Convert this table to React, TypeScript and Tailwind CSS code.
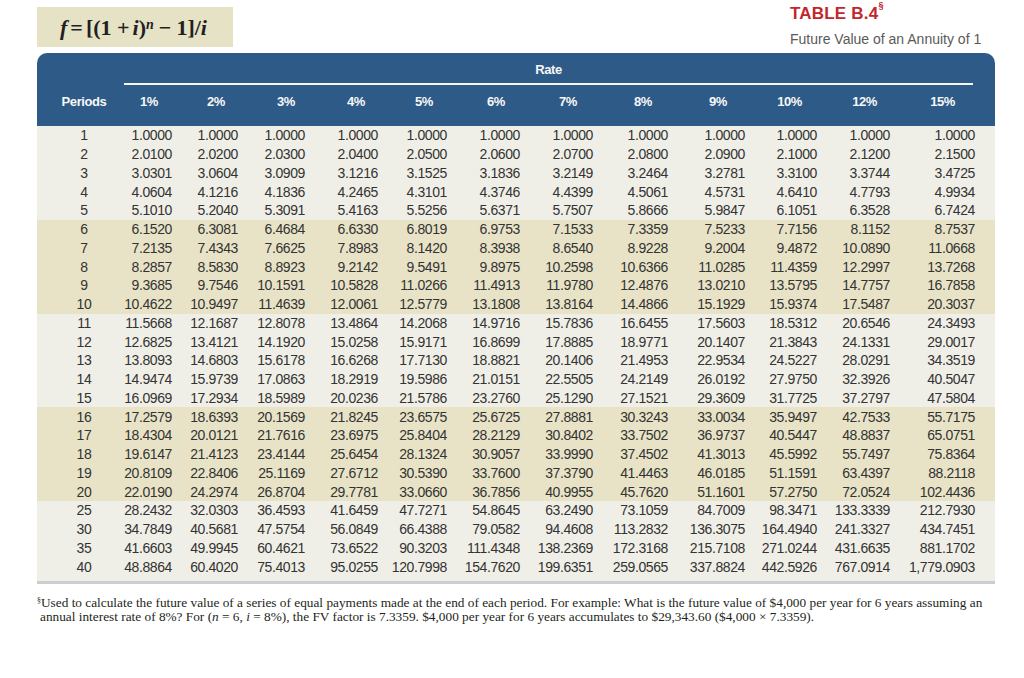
const rates = ['1%', '2%', '3%', '4%', '5%', '6%', '7%', '8%', '9%', '10%', '12%', '15%'];

// header labels sit a little left of the number column's right edge
const headerPad = [
  'pr-[14px]', 'pr-[13px]', 'pr-[10px]', 'pr-[13px]', 'pr-[14px]', 'pr-[15px]',
  'pr-[16px]', 'pr-[16px]', 'pr-[18px]', 'pr-[15px]', 'pr-[13px]', 'pr-[20px]',
];

const gridCols =
  'grid grid-cols-[79px_56px_66px_67px_73px_69px_73px_73px_75px_77px_72px_73px_85px]';

const bands: { shade: 'light' | 'dark'; rows: string[][] }[] = [
  {
    shade: 'light',
    rows: [
      ['1', '1.0000', '1.0000', '1.0000', '1.0000', '1.0000', '1.0000', '1.0000', '1.0000', '1.0000', '1.0000', '1.0000', '1.0000'],
      ['2', '2.0100', '2.0200', '2.0300', '2.0400', '2.0500', '2.0600', '2.0700', '2.0800', '2.0900', '2.1000', '2.1200', '2.1500'],
      ['3', '3.0301', '3.0604', '3.0909', '3.1216', '3.1525', '3.1836', '3.2149', '3.2464', '3.2781', '3.3100', '3.3744', '3.4725'],
      ['4', '4.0604', '4.1216', '4.1836', '4.2465', '4.3101', '4.3746', '4.4399', '4.5061', '4.5731', '4.6410', '4.7793', '4.9934'],
      ['5', '5.1010', '5.2040', '5.3091', '5.4163', '5.5256', '5.6371', '5.7507', '5.8666', '5.9847', '6.1051', '6.3528', '6.7424'],
    ],
  },
  {
    shade: 'dark',
    rows: [
      ['6', '6.1520', '6.3081', '6.4684', '6.6330', '6.8019', '6.9753', '7.1533', '7.3359', '7.5233', '7.7156', '8.1152', '8.7537'],
      ['7', '7.2135', '7.4343', '7.6625', '7.8983', '8.1420', '8.3938', '8.6540', '8.9228', '9.2004', '9.4872', '10.0890', '11.0668'],
      ['8', '8.2857', '8.5830', '8.8923', '9.2142', '9.5491', '9.8975', '10.2598', '10.6366', '11.0285', '11.4359', '12.2997', '13.7268'],
      ['9', '9.3685', '9.7546', '10.1591', '10.5828', '11.0266', '11.4913', '11.9780', '12.4876', '13.0210', '13.5795', '14.7757', '16.7858'],
      ['10', '10.4622', '10.9497', '11.4639', '12.0061', '12.5779', '13.1808', '13.8164', '14.4866', '15.1929', '15.9374', '17.5487', '20.3037'],
    ],
  },
  {
    shade: 'light',
    rows: [
      ['11', '11.5668', '12.1687', '12.8078', '13.4864', '14.2068', '14.9716', '15.7836', '16.6455', '17.5603', '18.5312', '20.6546', '24.3493'],
      ['12', '12.6825', '13.4121', '14.1920', '15.0258', '15.9171', '16.8699', '17.8885', '18.9771', '20.1407', '21.3843', '24.1331', '29.0017'],
      ['13', '13.8093', '14.6803', '15.6178', '16.6268', '17.7130', '18.8821', '20.1406', '21.4953', '22.9534', '24.5227', '28.0291', '34.3519'],
      ['14', '14.9474', '15.9739', '17.0863', '18.2919', '19.5986', '21.0151', '22.5505', '24.2149', '26.0192', '27.9750', '32.3926', '40.5047'],
      ['15', '16.0969', '17.2934', '18.5989', '20.0236', '21.5786', '23.2760', '25.1290', '27.1521', '29.3609', '31.7725', '37.2797', '47.5804'],
    ],
  },
  {
    shade: 'dark',
    rows: [
      ['16', '17.2579', '18.6393', '20.1569', '21.8245', '23.6575', '25.6725', '27.8881', '30.3243', '33.0034', '35.9497', '42.7533', '55.7175'],
      ['17', '18.4304', '20.0121', '21.7616', '23.6975', '25.8404', '28.2129', '30.8402', '33.7502', '36.9737', '40.5447', '48.8837', '65.0751'],
      ['18', '19.6147', '21.4123', '23.4144', '25.6454', '28.1324', '30.9057', '33.9990', '37.4502', '41.3013', '45.5992', '55.7497', '75.8364'],
      ['19', '20.8109', '22.8406', '25.1169', '27.6712', '30.5390', '33.7600', '37.3790', '41.4463', '46.0185', '51.1591', '63.4397', '88.2118'],
      ['20', '22.0190', '24.2974', '26.8704', '29.7781', '33.0660', '36.7856', '40.9955', '45.7620', '51.1601', '57.2750', '72.0524', '102.4436'],
    ],
  },
  {
    shade: 'light',
    rows: [
      ['25', '28.2432', '32.0303', '36.4593', '41.6459', '47.7271', '54.8645', '63.2490', '73.1059', '84.7009', '98.3471', '133.3339', '212.7930'],
      ['30', '34.7849', '40.5681', '47.5754', '56.0849', '66.4388', '79.0582', '94.4608', '113.2832', '136.3075', '164.4940', '241.3327', '434.7451'],
      ['35', '41.6603', '49.9945', '60.4621', '73.6522', '90.3203', '111.4348', '138.2369', '172.3168', '215.7108', '271.0244', '431.6635', '881.1702'],
      ['40', '48.8864', '60.4020', '75.4013', '95.0255', '120.7998', '154.7620', '199.6351', '259.0565', '337.8824', '442.5926', '767.0914', '1,779.0903'],
    ],
  },
];

export default function App() {
  return (
    <div className="w-[1024px] h-[678px] bg-white overflow-hidden font-['Liberation_Sans',Arial,sans-serif]">
      {/* top strip: formula + table title */}
      <div className="flex items-start justify-between pl-[37px] pr-[36px] pt-[7px] h-[53px]">
        <div className="w-[196px] h-[40px] bg-[#e6e2c6] flex items-center pl-[23px] font-['Liberation_Serif','Times_New_Roman',serif] font-bold text-[22px] text-[#231f20] whitespace-nowrap">
          <span className="italic">f</span>
          <span className="px-[3px]">=</span>
          <span>[(1 + </span>
          <span className="italic pl-[3px]">i</span>
          <span>)</span>
          <span className="italic text-[14px] self-start mt-[7px]">n</span>
          <span className="px-[5px]">−</span>
          <span>1]/</span>
          <span className="italic">i</span>
        </div>
        <div className="w-[198px] -mt-[4px]">
          <div className="text-[17px] font-bold text-[#c1272d] leading-[22px] tracking-[0.2px]">
            TABLE B.4<sup className="text-[9px] align-super">§</sup>
          </div>
          <div className="mt-[6px] text-[14px] text-[#5a5a5a] leading-[16px] whitespace-nowrap">
            Future Value of an Annuity of 1
          </div>
        </div>
      </div>

      {/* table */}
      <div className="ml-[37px] w-[958px]">
        <div className="bg-[#2e5a88] rounded-t-[10px] text-[#f7f7f7] font-bold text-[13px] tracking-[-0.4px]">
          <div className="ml-[87px] mr-[22px] h-[32px] pt-[4px] border-b-2 border-[#f4f4f4] flex items-center justify-center">
            Rate
          </div>
          <div className={`${gridCols} h-[41px] pb-[8px] items-center`}>
            <div className="pl-[15px] text-center">Periods</div>
            {rates.map((r, i) => (
              <div key={r} className={`text-right ${headerPad[i]}`}>
                {r}
              </div>
            ))}
          </div>
        </div>

        <div className="bg-[#f0efe7] pb-[5px] border-b-[3px] border-[#cdcdcd] text-[14px] text-[#333333] tracking-[-0.4px]">
          {bands.map((band, b) => (
            <div key={b} className={band.shade === 'dark' ? 'bg-[#e8e3c7]' : 'bg-[#f0efe7]'}>
              {band.rows.map(row => (
                <div key={row[0]} className={`${gridCols} h-[18.75px] items-center leading-none`}>
                  <div className="pl-[15px] text-center">{row[0]}</div>
                  {row.slice(1).map((v, i) => (
                    <div key={i} className="flex justify-end whitespace-nowrap">
                      {v}
                    </div>
                  ))}
                </div>
              ))}
            </div>
          ))}
        </div>
      </div>

      {/* footnote */}
      <div className="ml-[37px] mt-[12px] font-['Liberation_Serif','Times_New_Roman',serif] text-[13.3px] leading-[13.5px] text-[#231f20] whitespace-nowrap">
        <div>
          <sup className="text-[8px]">§</sup>Used to calculate the future value of a series of equal payments made at the end of each period. For example: What is the future value of $4,000 per year for 6 years assuming an
        </div>
        <div className="pl-[3px]">
          annual interest rate of 8%? For (<span className="italic">n</span> = 6, <span className="italic">i</span> = 8%), the FV factor is 7.3359. $4,000 per year for 6 years accumulates to $29,343.60 ($4,000 × 7.3359).
        </div>
      </div>
    </div>
  );
}
